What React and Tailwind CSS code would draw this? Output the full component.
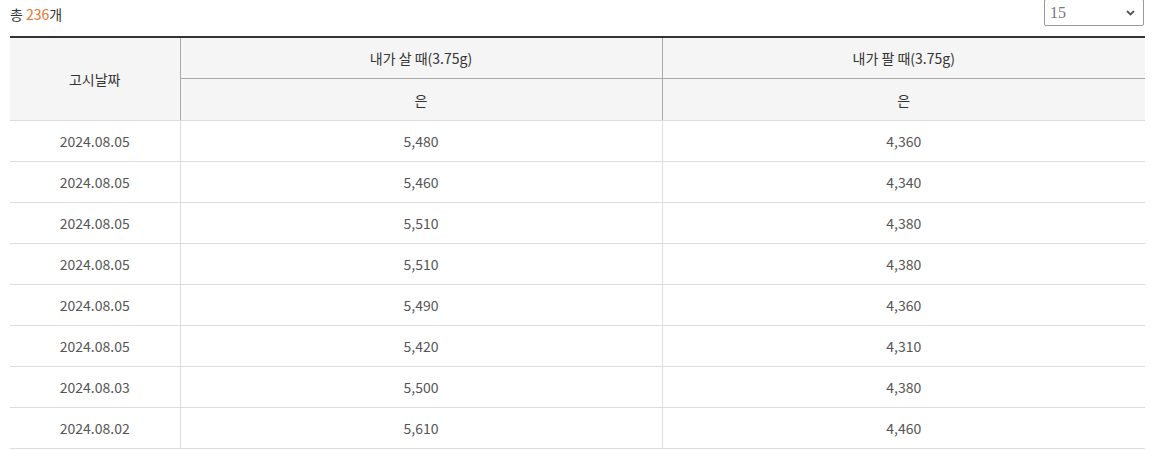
import React from 'react';

const rows = [
    ['2024.08.05', '5,480', '4,360'],
    ['2024.08.05', '5,460', '4,340'],
    ['2024.08.05', '5,510', '4,380'],
    ['2024.08.05', '5,510', '4,380'],
    ['2024.08.05', '5,490', '4,360'],
    ['2024.08.05', '5,420', '4,310'],
    ['2024.08.03', '5,500', '4,380'],
    ['2024.08.02', '5,610', '4,460'],
];

const App = () => {
    return (
        <div className="w-[1135px] ml-[10px] bg-white text-[14px] text-[#555]" style={{ fontFamily: '"Noto Sans CJK KR", "Noto Sans", sans-serif' }}>
            <div className="flex items-start justify-between h-[26px]">
                <p className="mt-[4px] leading-[20px] text-[14px] text-[#333]">
                    총 <span className="text-[#e8732d]">236</span>개
                </p>
                <div className="relative mt-[-1px] mr-[1px] w-[100px] h-[27px]">
                    <select
                        defaultValue="15"
                        className="appearance-none w-full h-full border border-[#999] rounded-[2px] bg-white pl-[5px] pt-[1px] text-[16px] text-[#777] outline-none"
                        style={{ fontFamily: '"Liberation Serif", serif' }}
                    >
                        <option>15</option>
                        <option>30</option>
                        <option>50</option>
                    </select>
                    <svg className="absolute right-[9px] top-[11px] pointer-events-none" width="9" height="6" viewBox="0 0 9 6">
                        <path d="M1 1 L4.5 4.5 L8 1" fill="none" stroke="#555" strokeWidth="1.8" />
                    </svg>
                </div>
            </div>
            <table className="mt-[10px] w-full border-collapse table-fixed border-t-2 border-[#333]">
                <colgroup>
                    <col className="w-[170px]" />
                    <col className="w-[482px]" />
                    <col />
                </colgroup>
                <thead className="bg-[#f5f5f5] text-[#333]">
                    <tr className="h-[41px]">
                        <th rowSpan={2} className="pt-[2px] font-normal border-r border-[#aaa] border-b border-b-[#ddd]">고시날짜</th>
                        <th className="pt-[2px] font-normal border-r border-b border-[#aaa]">내가 살 때(3.75g)</th>
                        <th className="pt-[2px] font-normal border-b border-[#aaa]">내가 팔 때(3.75g)</th>
                    </tr>
                    <tr className="h-[42px]">
                        <th className="pt-[2px] font-normal border-r border-r-[#aaa] border-b border-b-[#ddd]">은</th>
                        <th className="pt-[2px] font-normal border-b border-[#ddd]">은</th>
                    </tr>
                </thead>
                <tbody>
                    {rows.map((r, i) => (
                        <tr key={i} className="h-[41px] border-b border-[#ddd]">
                            <td className="pt-[2px] text-center border-r border-[#ddd]">{r[0]}</td>
                            <td className="pt-[2px] text-center border-r border-[#ddd]">{r[1]}</td>
                            <td className="pt-[2px] text-center">{r[2]}</td>
                        </tr>
                    ))}
                </tbody>
            </table>
        </div>
    );
};

export default App;
